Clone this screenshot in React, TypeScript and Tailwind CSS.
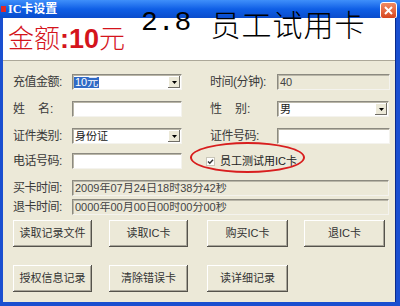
import clsx from "clsx";

const cjk = "font-['Liberation_Sans','Noto_Sans_CJK_SC',sans-serif]";

// classic sunken edit box
const Field = ({
  w,
  value,
  readOnly,
  select,
  highlight,
}: {
  w: string;
  value?: string;
  readOnly?: boolean;
  select?: boolean;
  highlight?: boolean;
}) => (
  <div
    className={clsx(
      "h-[16px] flex items-center border border-t-[#8c8a80] border-l-[#8c8a80] border-b-[#f4f3ee] border-r-[#f4f3ee] shadow-[inset_1px_1px_0_#b9b6a8]",
      readOnly ? "bg-[#ece9d8]" : "bg-white",
      w
    )}
  >
    <div className={clsx("flex-1 pl-[1px] text-[11px] leading-none truncate", readOnly ? "text-[#444]" : "text-[#222]")}>
      {value && (
        <span className={clsx("px-[1px] py-[1px]", highlight && "bg-[#316ac5] text-white")}>{value}</span>
      )}
    </div>
    {select && (
      <div className="w-[12px] h-[12px] mr-[1px] bg-[#ece9d8] flex items-center justify-center shadow-[inset_-1px_-1px_0_#6f6d66,inset_1px_1px_0_#fff]">
        <svg width="5" height="3" viewBox="0 0 5 3">
          <path d="M0 0h5L2.5 3z" fill="#000" />
        </svg>
      </div>
    )}
  </div>
);

const Label = ({ text, spread, w }: { text: string; spread?: boolean; w: string }) =>
  spread ? (
    <div className={clsx("flex text-[12px] leading-none text-[#3a3a3a]", w)}>
      <span className="w-[37px] flex justify-between">
        <span>{text[0]}</span>
        <span>{text[1]}</span>
      </span>
      <span>:</span>
    </div>
  ) : (
    <div className={clsx("text-[12px] leading-none text-[#3a3a3a] tracking-[-0.5px]", w)}>{text}</div>
  );

const Btn = ({ text, w, ml }: { text: string; w: string; ml: string }) => (
  <button
    className={clsx(
      "h-[27px] bg-[#ece9d8] text-[11px] text-[#333] shadow-[inset_-1px_-1px_0_#55534c,inset_1px_1px_0_#fff,inset_-2px_-2px_0_#a9a69a]",
      w,
      ml
    )}
  >
    {text}
  </button>
);

export default function App() {
  return (
    <div className={clsx("relative w-[400px] h-[306px] bg-[#1a4fd0] flex flex-col overflow-hidden", cjk)}>
      {/* title bar */}
      <div className="h-[18px] flex items-center bg-gradient-to-b from-[#3f8ffa] via-[#0f5fe6] to-[#0a4ccc]">
        <div className="ml-[1px] w-[5px] h-[6px] bg-[#e02828]" />
        <span className="ml-[2px] text-[12px] font-bold text-white leading-none font-['Liberation_Serif','Noto_Sans_CJK_SC',serif]">
          IC卡设置
        </span>
        <div className="flex-1" />
        <div className="mr-[3px] mt-[2px] w-[17px] h-[17px] rounded-[3px] border border-white bg-gradient-to-b from-[#f08a62] to-[#d6431c] flex items-center justify-center">
          <svg width="9" height="9" viewBox="0 0 9 9">
            <path d="M1 1l7 7M8 1L1 8" stroke="#fff" strokeWidth="2" />
          </svg>
        </div>
      </div>

      {/* client area */}
      <div className="flex-1 ml-[3px] mr-[5px] mb-[4px] bg-[#ece9d8] flex flex-col shadow-[1px_0_0_#0a2a8a]">
        <div className="h-[43px] bg-white border-b border-[#aca899] flex items-center pl-[5px] text-[#d4141c]">
          <span className="text-[26px] leading-none font-light">金额</span>
          <span className="text-[27px] leading-none font-bold font-['Liberation_Sans',sans-serif]">:10</span>
          <span className="text-[26px] leading-none font-light">元</span>
        </div>

        <div className="flex flex-col pl-[10px]">
          <div className="mt-[13px] h-[16px] flex items-center">
            <Label text="充值金额:" w="w-[59px]" />
            <Field w="w-[110px]" value="10元" select highlight />
            <Label text="时间(分钟):" w="w-[67px] ml-[28px]" />
            <Field w="w-[113px]" value="40" readOnly />
          </div>
          <div className="mt-[11px] h-[16px] flex items-center">
            <Label text="姓名" spread w="w-[59px]" />
            <Field w="w-[110px]" />
            <Label text="性别" spread w="w-[67px] ml-[28px]" />
            <Field w="w-[112px]" value="男" select />
          </div>
          <div className="mt-[11px] h-[16px] flex items-center">
            <Label text="证件类别:" w="w-[59px]" />
            <Field w="w-[110px]" value="身份证" select />
            <Label text="证件号码:" w="w-[67px] ml-[28px]" />
            <Field w="w-[113px]" />
          </div>
          <div className="mt-[9px] h-[16px] flex items-center">
            <Label text="电话号码:" w="w-[59px]" />
            <Field w="w-[110px]" />
            <div className="ml-[24px] flex items-center gap-[5px] text-[11px] leading-none text-[#222]">
              <svg width="9" height="9" viewBox="0 0 9 9">
                <rect x="0.5" y="0.5" width="8" height="8" fill="#fff" stroke="#c9c6b8" />
                <path d="M2 4.5l1.8 1.8L7 2.8" stroke="#333" strokeWidth="1.4" fill="none" />
              </svg>
              <span>员工测试用IC卡</span>
            </div>
          </div>
          <div className="mt-[11px] h-[16px] flex items-center">
            <Label text="买卡时间:" w="w-[59px]" />
            <Field w="w-[317px]" value="2009年07月24日18时38分42秒" readOnly />
          </div>
          <div className="mt-[3px] h-[16px] flex items-center">
            <Label text="退卡时间:" w="w-[59px]" />
            <Field w="w-[317px]" value="0000年00月00日00时00分00秒" readOnly />
          </div>

          <div className="mt-[5px] flex">
            <Btn text="读取记录文件" w="w-[79px]" ml="ml-0" />
            <Btn text="读取IC卡" w="w-[79px]" ml="ml-[17px]" />
            <Btn text="购买IC卡" w="w-[81px]" ml="ml-[19px]" />
            <Btn text="退IC卡" w="w-[81px]" ml="ml-[16px]" />
          </div>
          <div className="mt-[18px] flex">
            <Btn text="授权信息记录" w="w-[79px]" ml="ml-0" />
            <Btn text="清除错误卡" w="w-[79px]" ml="ml-[17px]" />
            <Btn text="读详细记录" w="w-[81px]" ml="ml-[19px]" />
          </div>
        </div>
      </div>

      {/* annotation drawn over the dialog */}
      <div className="absolute left-[141px] top-[8px] flex items-center text-black leading-none">
        <span className="text-[28px] font-['Liberation_Mono',monospace]">2.8</span>
        <span className="ml-[19px] text-[30px] tracking-[1px] font-light font-['Noto_Sans_CJK_SC',sans-serif]">
          员工试用卡
        </span>
      </div>
      <div className="absolute left-[190px] top-[142px] w-[115px] h-[31px] rounded-[50%] border-2 border-[#d81e1e]" />
    </div>
  );
}
